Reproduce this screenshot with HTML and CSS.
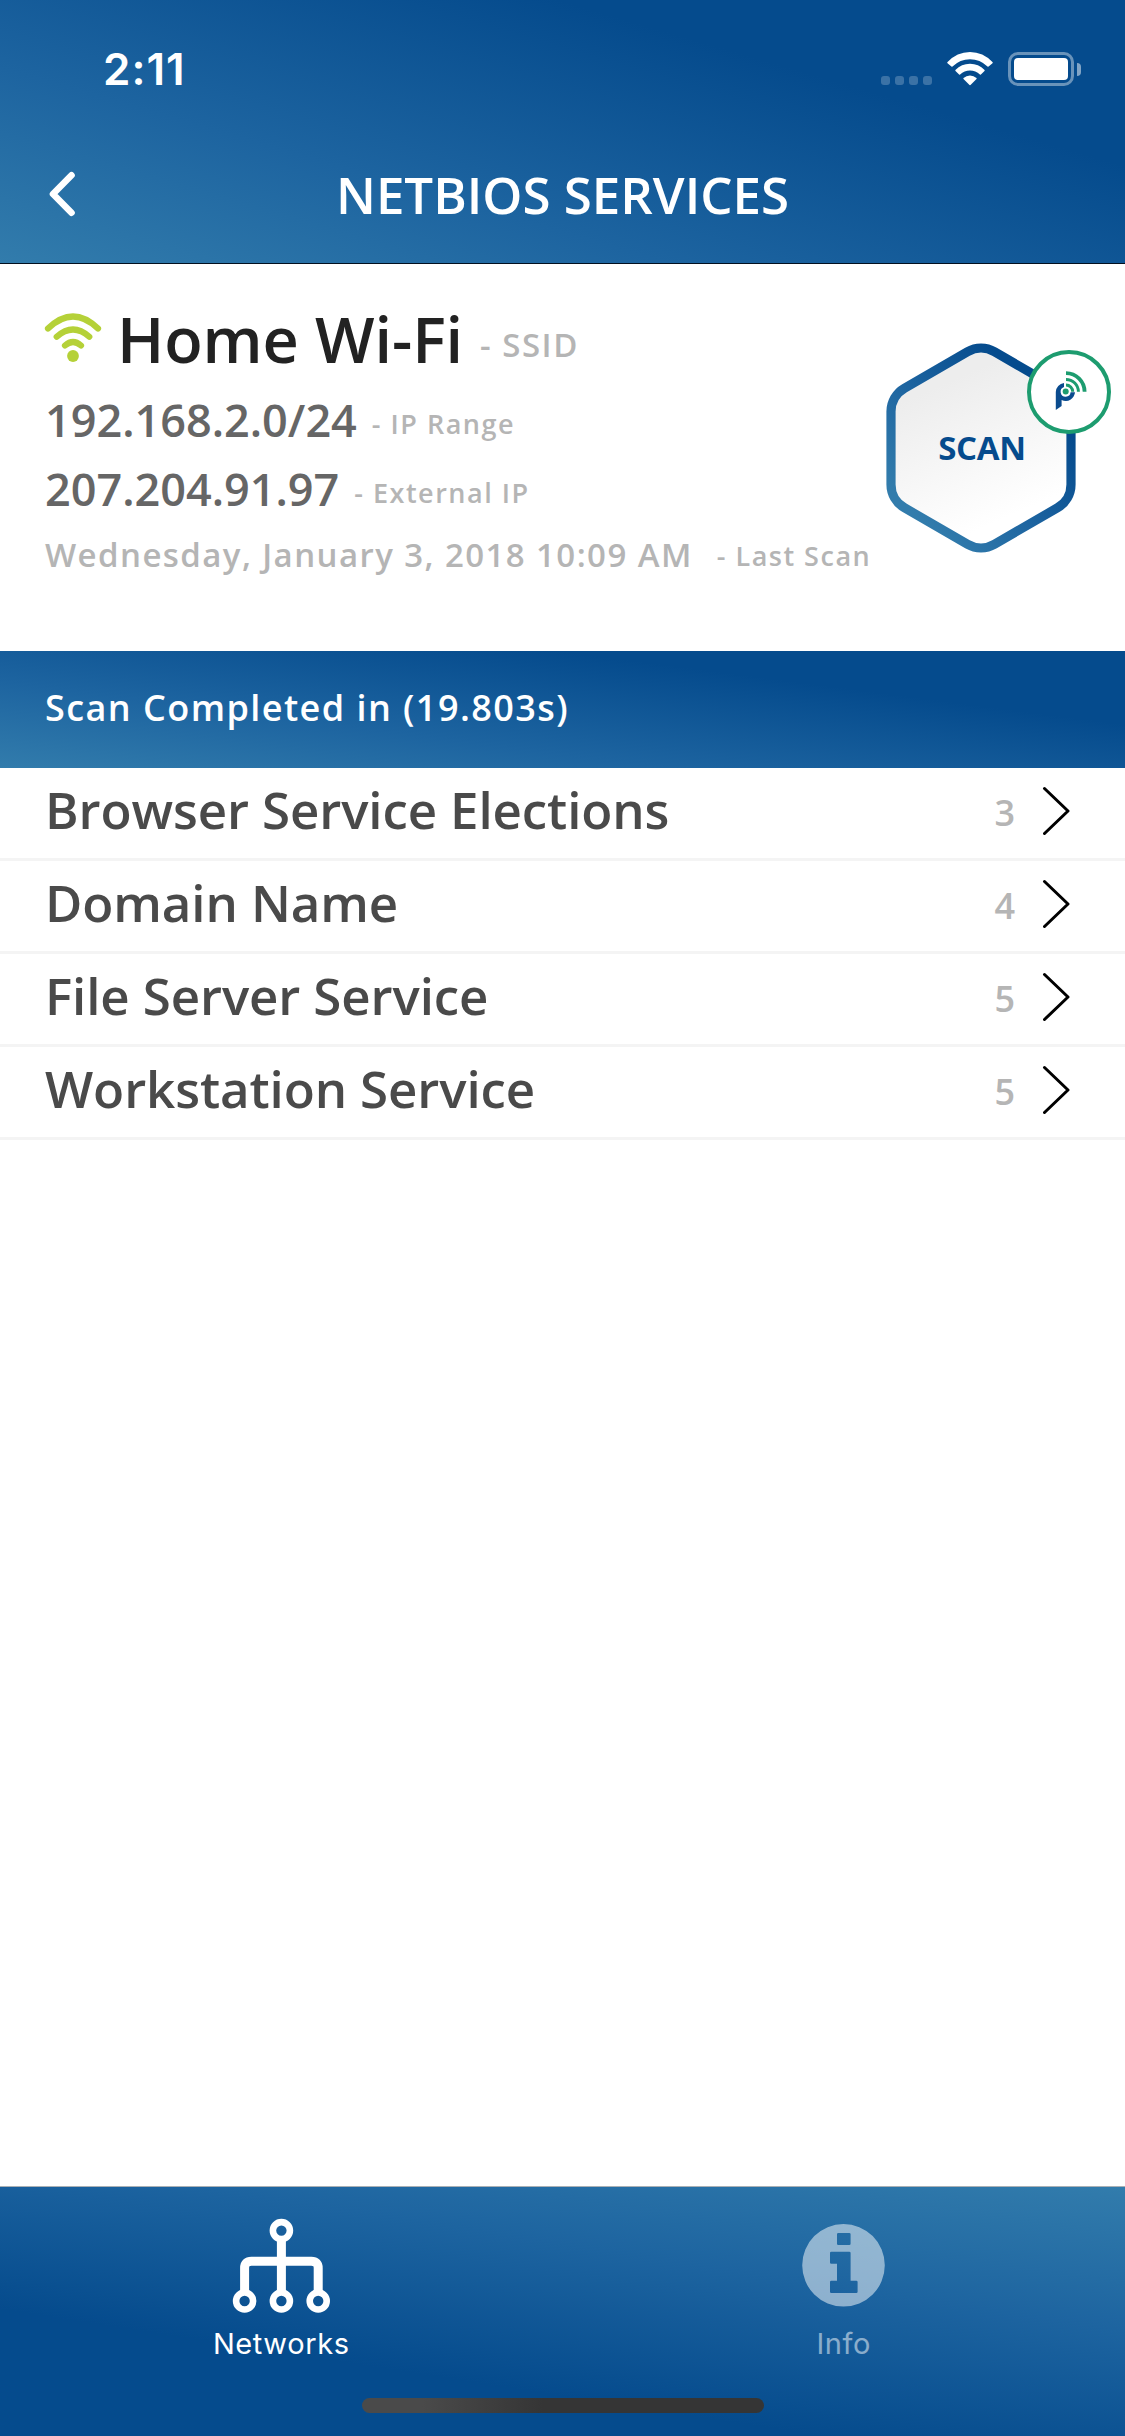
FILE: index.html
```
<!DOCTYPE html>
<html lang="en">
<head>
    <meta charset="UTF-8">
    <meta name="viewport" content="width=device-width, initial-scale=1.0">
    <title>NetBIOS Services</title>
    <link rel="stylesheet" href="styles.css">
</head>
<body>
    <div class="screen">
        <header class="header">
            <div class="status-bar">
                <span class="time">2:11</span>
                <div class="status-icons">
                    <div class="signal"><i></i><i></i><i></i><i></i></div>
                    <svg class="status-wifi" width="46" height="34" viewBox="0 0 46 34" fill="#fff">
                        <path d="M0.3 10.2 Q10 0 23 0 Q36 0 45.7 10.2 Q45.9 10.8 45.5 11.2 L41.6 14.6 Q41 14.9 40.5 14.5 Q33 7.2 23 7.2 Q13 7.2 5.5 14.5 Q5 14.9 4.4 14.6 L0.5 11.2 Q0.1 10.8 0.3 10.2 Z"/>
                        <path d="M8.4 18 Q14.5 11.8 23 11.8 Q31.5 11.8 37.6 18 Q37.9 18.5 37.5 19 L33.9 22.5 Q33.4 22.8 32.9 22.4 Q28.7 18.5 23 18.5 Q17.3 18.5 13.1 22.4 Q12.6 22.8 12.1 22.5 L8.5 19 Q8.1 18.5 8.4 18 Z"/>
                        <path d="M16.5 26 Q19.3 23.5 23 23.5 Q26.7 23.5 29.5 26 Q29.9 26.5 29.5 27 L23.5 33 Q23 33.3 22.5 33 L16.5 27 Q16.1 26.5 16.5 26 Z"/>
                    </svg>
                    <div class="battery"><div class="battery-body"><div class="battery-level"></div></div><div class="battery-cap"></div></div>
                </div>
            </div>
            <div class="nav-bar">
                <svg class="back" width="28" height="46" viewBox="0 0 28 46" fill="none" stroke="#fff" stroke-width="6.6" stroke-linecap="round" stroke-linejoin="round">
                    <path d="M23.5 4.3 L5 23 L23.5 41.7"/>
                </svg>
                <h1>NETBIOS SERVICES</h1>
            </div>
        </header>

        <section class="network">
            <div class="details">
                <div class="row ssid">
                    <svg class="wifi" width="58" height="50" viewBox="0 0 58 50" fill="none" stroke="#b5d138" stroke-width="6.2" stroke-linecap="round">
                        <path d="M4 15.5 Q29 -8.5 54 15.5"/>
                        <path d="M12.7 23.8 Q29 9.2 45.3 23.8"/>
                        <path d="M21 32.5 Q29 25.5 37 32.5"/>
                        <circle cx="29" cy="43" r="5.9" fill="#b5d138" stroke="none"/>
                    </svg>
                    <span class="name">Home Wi-Fi</span>
                    <span class="note">- SSID</span>
                </div>
                <div class="row ip">
                    <span class="value">192.168.2.0/24</span>
                    <span class="note">- IP Range</span>
                </div>
                <div class="row ip">
                    <span class="value">207.204.91.97</span>
                    <span class="note">- External IP</span>
                </div>
                <div class="row last-scan">
                    <span class="date">Wednesday, January 3, 2018 10:09 AM</span>
                    <span class="note">- Last Scan</span>
                </div>
            </div>
            <div class="scan">
                <svg class="hexagon" width="190" height="210" viewBox="-95 -105 190 210">
                    <defs>
                        <linearGradient id="edge" x1="0" y1="1" x2="1" y2="0">
                            <stop offset="0.15" stop-color="#327cac"/>
                            <stop offset="0.45" stop-color="#1d64a0"/>
                            <stop offset="0.78" stop-color="#054b8d"/>
                        </linearGradient>
                        <linearGradient id="face" x1="0.3" y1="0" x2="0.7" y2="1">
                            <stop offset="0.15" stop-color="#ededed"/>
                            <stop offset="0.85" stop-color="#ffffff"/>
                        </linearGradient>
                    </defs>
                    <path d="M-13.5 -96.2 A27 27 0 0 1 13.5 -96.2 L76.5 -59.8 A27 27 0 0 1 90 -36.4 L90 36.4 A27 27 0 0 1 76.5 59.8 L13.5 96.2 A27 27 0 0 1 -13.5 96.2 L-76.5 59.8 A27 27 0 0 1 -90 36.4 L-90 -36.4 A27 27 0 0 1 -76.5 -59.8 Z" fill="url(#face)" stroke="url(#edge)" stroke-width="9.2"/>
                </svg>
                <span class="scan-label">SCAN</span>
                <svg class="badge" width="84" height="84" viewBox="-42 -42 84 84">
                    <circle r="40" fill="#fff" stroke="#1d9c6f" stroke-width="4"/>
                    <g fill="none" stroke="#1d9c6f">
                        <path d="M-3 -18.8 A18.6 18.6 0 0 1 15.6 -0.2" stroke-width="3.8"/>
                        <path d="M-3 -12.6 A12.4 12.4 0 0 1 9.4 -0.2" stroke-width="3"/>
                        <path d="M-3 -6.9 A6.7 6.7 0 0 1 3.7 -0.2" stroke-width="3"/>
                    </g>
                    <circle cx="-3.3" cy="-0.5" r="3" fill="#1d9c6f"/>
                    <path d="M-5 -9 A9.3 9.3 0 0 0 -13.2 0 L-13.2 18 L-7.4 14 L-7.4 8 A9.3 9.3 0 0 0 6 0.3 L1.6 0.3 A5 5 0 1 1 -5 -5 Z" fill="#0a4b8e"/>
                </svg>
            </div>
        </section>

        <div class="result">Scan Completed in (19.803s)</div>

        <ul class="services">
            <li>
                <span class="service">Browser Service Elections</span>
                <span class="count">3</span>
                <svg class="chevron" width="28" height="50" viewBox="0 0 28 50"><path d="M2.5 2.5 L26 25 L2.5 47.5"/></svg>
            </li>
            <li>
                <span class="service">Domain Name</span>
                <span class="count">4</span>
                <svg class="chevron" width="28" height="50" viewBox="0 0 28 50"><path d="M2.5 2.5 L26 25 L2.5 47.5"/></svg>
            </li>
            <li>
                <span class="service">File Server Service</span>
                <span class="count">5</span>
                <svg class="chevron" width="28" height="50" viewBox="0 0 28 50"><path d="M2.5 2.5 L26 25 L2.5 47.5"/></svg>
            </li>
            <li>
                <span class="service">Workstation Service</span>
                <span class="count">5</span>
                <svg class="chevron" width="28" height="50" viewBox="0 0 28 50"><path d="M2.5 2.5 L26 25 L2.5 47.5"/></svg>
            </li>
        </ul>

        <nav class="tab-bar">
            <div class="tabs">
                <a class="tab">
                    <svg width="100" height="96" viewBox="0 0 100 96" fill="none" stroke="#fff">
                        <g stroke-width="9">
                            <path d="M50.4 22 V76"/>
                            <path d="M13.6 76 V51 Q13.6 44.3 20.4 44.3 H80.4 Q87.2 44.3 87.2 51 V76"/>
                        </g>
                        <g stroke-width="6.6">
                            <circle cx="50.4" cy="13.6" r="8.5"/>
                            <circle cx="13.6" cy="84" r="8.5"/>
                            <circle cx="50.4" cy="84" r="8.5"/>
                            <circle cx="87.2" cy="84" r="8.5"/>
                        </g>
                    </svg>
                    <span>Networks</span>
                </a>
                <a class="tab inactive">
                    <svg width="100" height="96" viewBox="0 0 100 96" fill="#fff">
                        <path fill-rule="evenodd" d="M49.5 7 A41.3 41.3 0 1 1 49.5 89.6 A41.3 41.3 0 1 1 49.5 7 Z M44.3 16 Q43 16 43 17.3 V26.7 Q43 28 44.3 28 H55.3 Q56.6 28 56.6 26.7 V17.3 Q56.6 16 55.3 16 Z M37.3 34.7 Q36 34.7 36 36 V45.4 Q36 46.7 37.3 46.7 H43 V63.7 H37.3 Q36 63.7 36 65 V74.7 Q36 76 37.3 76 H62.3 Q63.6 76 63.6 74.7 V65 Q63.6 63.7 62.3 63.7 H56.6 V36 Q56.6 34.7 55.3 34.7 Z"/>
                    </svg>
                    <span>Info</span>
                </a>
            </div>
            <div class="home-indicator"></div>
        </nav>
    </div>
</body>
</html>
```
FILE: styles.css
```
* {
    box-sizing: border-box;
}

body {
    margin: 0;
    background-color: #fff;
    font-family: "Open Sans", "Noto Sans", sans-serif;
    font-weight: 600;
}

svg {
    display: block;
    flex: none;
}

.screen {
    width: 1125px;
    height: 2436px;
    display: flex;
    flex-direction: column;
    overflow: hidden;
    white-space: nowrap;
}

/* header */
.header {
    height: 264px;
    border-bottom: 1px solid #03101f;
    background: linear-gradient(16.3deg, #327cac 0%, #1d64a0 33%, #054b8d 72%);
    color: #fff;
}

.status-bar {
    height: 132px;
    display: flex;
    justify-content: space-between;
    padding: 52px 44px 0 103px;
}

.time {
    font-family: Inter, sans-serif;
    font-size: 44px;
    line-height: 34px;
    letter-spacing: 1px;
}

.status-icons {
    display: flex;
    height: 34px;
}

.signal {
    display: flex;
    gap: 5px;
    padding-top: 24px;
    margin-right: 15px;
}

.signal i {
    width: 9px;
    height: 9px;
    border-radius: 3px;
    background: rgba(255, 255, 255, 0.22);
}

.battery {
    display: flex;
    align-items: center;
    gap: 3px;
    margin-left: 15px;
}

.battery-body {
    width: 66px;
    height: 34px;
    padding: 3px;
    border: 3px solid rgba(255, 255, 255, 0.4);
    border-radius: 10px;
}

.battery-level {
    height: 22px;
    border-radius: 4px;
    background: #fff;
}

.battery-cap {
    width: 4px;
    height: 13px;
    border-radius: 0 4px 4px 0;
    background: rgba(255, 255, 255, 0.5);
}

.nav-bar {
    display: grid;
    grid-template-columns: 80px 1fr 80px;
    align-items: center;
    height: 124px;
}

.back {
    margin-left: 48px;
}

h1 {
    margin: 0;
    text-align: center;
    font-size: 51px;
    font-weight: 600;
    line-height: 70px;
}

/* network details */
.network {
    height: 387px;
    display: flex;
    justify-content: space-between;
    padding: 36px 14px 0 45px;
}

.row {
    display: flex;
    align-items: center;
}

.note {
    color: #b5b5b5;
    font-size: 27px;
    letter-spacing: 1.5px;
    margin-top: 8px;
}

.ssid {
    height: 76px;
    margin-bottom: 9px;
}

.wifi {
    margin-left: -1px;
}

.name {
    margin-left: 15px;
    color: #222;
    font-size: 63px;
    letter-spacing: -0.1px;
}

.ssid .note {
    margin: 12px 0 0 17px;
    font-size: 33px;
}

.ip {
    height: 69px;
}

.value {
    color: #666;
    font-size: 45px;
}

.ip .note {
    margin-left: 15px;
}

.last-scan {
    height: 62px;
}

.date {
    color: #b5b5b5;
    font-size: 33px;
    letter-spacing: 1.42px;
}

.last-scan .note {
    margin: 3px 0 0 24px;
}

.scan {
    position: relative;
    width: 225px;
    height: 210px;
    margin-top: 43px;
}

.scan-label {
    position: absolute;
    left: 0;
    top: 0;
    width: 192px;
    line-height: 210px;
    text-align: center;
    color: #054b8d;
    font-size: 33px;
    font-weight: 700;
    letter-spacing: -0.3px;
}

.badge {
    position: absolute;
    right: 0;
    top: 7px;
}

.result {
    height: 117px;
    padding-left: 45px;
    line-height: 114px;
    background: linear-gradient(7.4deg, #327cac 0%, #1d64a0 33%, #054b8d 72%);
    color: #fff;
    font-size: 36px;
    letter-spacing: 1.44px;
}

/* services */
.services {
    flex: 1;
    margin: 0;
    padding: 0;
    list-style: none;
}

.services li {
    height: 93px;
    display: flex;
    padding: 0 55px 0 45px;
    border-bottom: 3px solid #f4f4f4;
}

.service {
    flex: 1;
    color: #4a4a4a;
    font-size: 51px;
    line-height: 83px;
    letter-spacing: -0.1px;
}

.count {
    color: #b5b5b5;
    font-size: 36px;
    line-height: 89px;
}

.chevron {
    margin: 18px 0 0 27px;
    fill: none;
    stroke: #000;
    stroke-width: 3px;
    stroke-linecap: round;
    stroke-linejoin: round;
}

/* tab bar */
.tab-bar {
    height: 250px;
    padding-top: 30px;
    border-top: 1px solid #a9b0b5;
    background: linear-gradient(188.8deg, #327cac 0%, #1d64a0 34%, #054b8d 70%);
    color: #fff;
}

.tabs {
    display: flex;
    height: 181px;
}

.tab {
    flex: 1;
    display: flex;
    flex-direction: column;
    align-items: center;
    font-family: Inter, sans-serif;
    font-size: 29px;
    font-weight: 400;
    letter-spacing: 0.6px;
}

.tab span {
    margin-top: 13px;
    line-height: 36px;
}

.inactive {
    opacity: 0.5;
}

.home-indicator {
    width: 402px;
    height: 15px;
    margin: 0 auto;
    border-radius: 8px;
    background: linear-gradient(to right, #4a4a4a 15%, #353535 45%);
}
```
